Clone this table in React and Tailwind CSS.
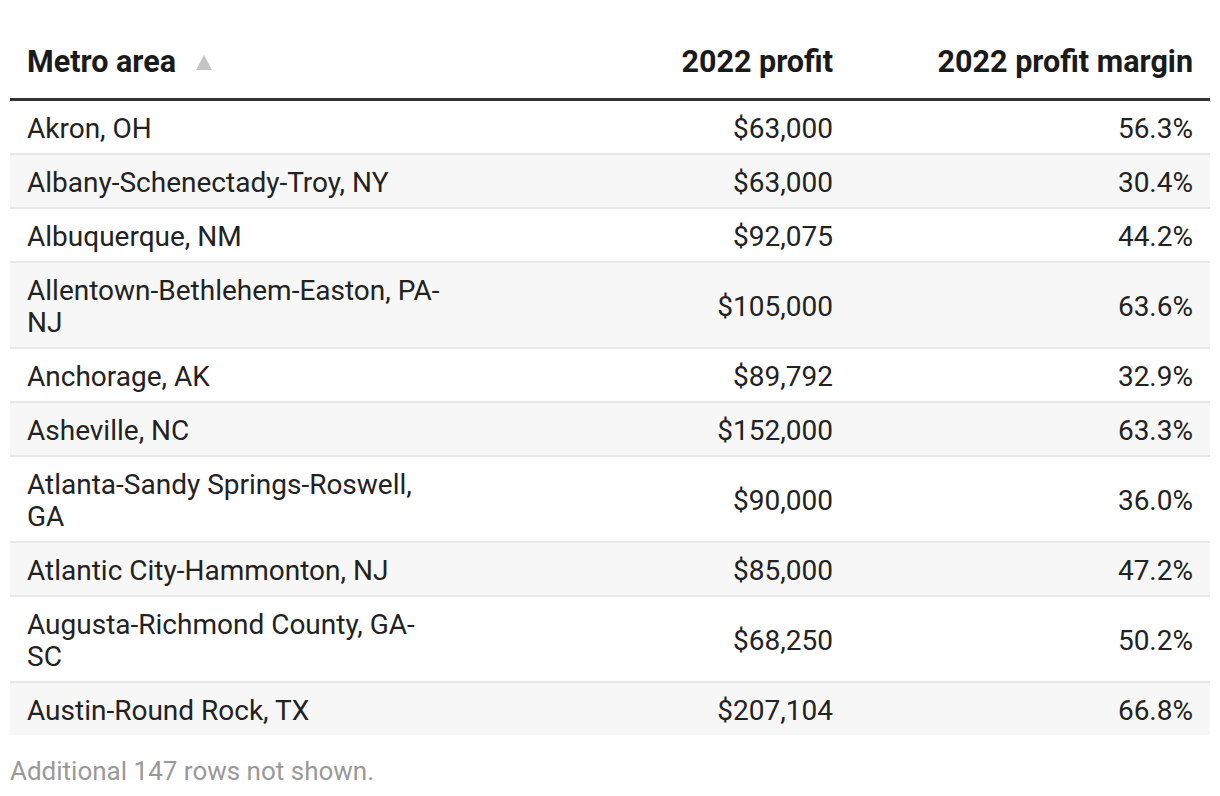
import React from 'react';

const ROWS = [
  ['Akron, OH', '$63,000', '56.3%'],
  ['Albany-Schenectady-Troy, NY', '$63,000', '30.4%'],
  ['Albuquerque, NM', '$92,075', '44.2%'],
  ['Allentown-Bethlehem-Easton, PA-NJ', '$105,000', '63.6%'],
  ['Anchorage, AK', '$89,792', '32.9%'],
  ['Asheville, NC', '$152,000', '63.3%'],
  ['Atlanta-Sandy Springs-Roswell, GA', '$90,000', '36.0%'],
  ['Atlantic City-Hammonton, NJ', '$85,000', '47.2%'],
  ['Augusta-Richmond County, GA-SC', '$68,250', '50.2%'],
  ['Austin-Round Rock, TX', '$207,104', '66.8%'],
];

export default function App() {
  return (
    <div className="w-[1220px] h-[796px] bg-white px-[10px] pt-[34px] font-['Roboto',sans-serif] text-[#222]">
      <table className="w-full table-fixed border-collapse">
        <colgroup>
          <col className="w-[455px]" />
          <col className="w-[385px]" />
          <col className="w-[360px]" />
        </colgroup>
        <thead>
          <tr className="border-b-[3px] border-[#333]">
            <th className="px-[17px] pt-[12px] pb-[20px] text-left text-[30.5px] leading-[32px] font-bold text-[#1a1a1a]">
              <span className="inline-flex items-center">
                Metro area
                <svg width="16" height="15" viewBox="0 0 16 15" className="ml-[20px]">
                  <path d="M8 0L16 15H0Z" fill="#c4c4c4" />
                </svg>
              </span>
            </th>
            <th className="px-[17px] pt-[12px] pb-[20px] text-right text-[30.5px] leading-[32px] font-bold text-[#1a1a1a]">2022 profit</th>
            <th className="px-[17px] pt-[12px] pb-[20px] text-right text-[30.5px] leading-[32px] font-bold text-[#1a1a1a]">2022 profit margin</th>
          </tr>
        </thead>
        <tbody>
          {ROWS.map((r, i) => (
            <tr
              key={r[0]}
              className={`${i % 2 === 1 ? 'bg-[#f7f7f7]' : 'bg-white'} ${i < ROWS.length - 1 ? 'border-b-2 border-[#e8e8e8]' : ''}`}
            >
              <td className="px-[17px] pt-[12px] pb-[8px] text-[28px] leading-[32px] align-middle">{r[0]}</td>
              <td className="px-[17px] pt-[12px] pb-[8px] text-[28px] leading-[32px] text-right align-middle">{r[1]}</td>
              <td className="px-[17px] pt-[12px] pb-[8px] text-[28px] leading-[32px] text-right align-middle">{r[2]}</td>
            </tr>
          ))}
        </tbody>
      </table>
      <p className="mt-[20px] text-[26px] leading-[32px] text-[#999]">Additional 147 rows not shown.</p>
    </div>
  );
}
